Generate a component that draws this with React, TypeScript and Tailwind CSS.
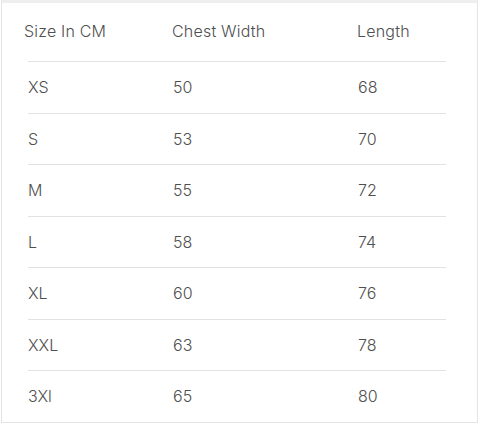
const rows = [
  ['XS', '50', '68'],
  ['S', '53', '70'],
  ['M', '55', '72'],
  ['L', '58', '74'],
  ['XL', '60', '76'],
  ['XXL', '63', '78'],
  ['3Xl', '65', '80'],
];

export default function App() {
  return (
    <div className="h-[424px] w-[479px] bg-white font-['Inter',sans-serif] text-[16px] font-light text-[#4f4f4f]">
      <div className="ml-px h-[423px] w-[477px] border-x border-b border-t-[3px] border-x-[#e4e4e4] border-b-[#e4e4e4] border-t-[#eeeeee]">
        {/* header */}
        <div className="grid h-[58px] grid-cols-[148px_185px_1fr] items-center pb-[2px] pl-[22px] tracking-[0.2px]">
          <span>Size In CM</span>
          <span>Chest Width</span>
          <span>Length</span>
        </div>
        <div className="ml-[26px] w-[418px]">
          {rows.map(r => (
            <div
              key={r[0]}
              className="grid h-[51.5px] grid-cols-[145px_185px_1fr] items-center border-t border-[#e2e2e2]"
            >
              <span>{r[0]}</span>
              <span>{r[1]}</span>
              <span>{r[2]}</span>
            </div>
          ))}
        </div>
      </div>
    </div>
  );
}
